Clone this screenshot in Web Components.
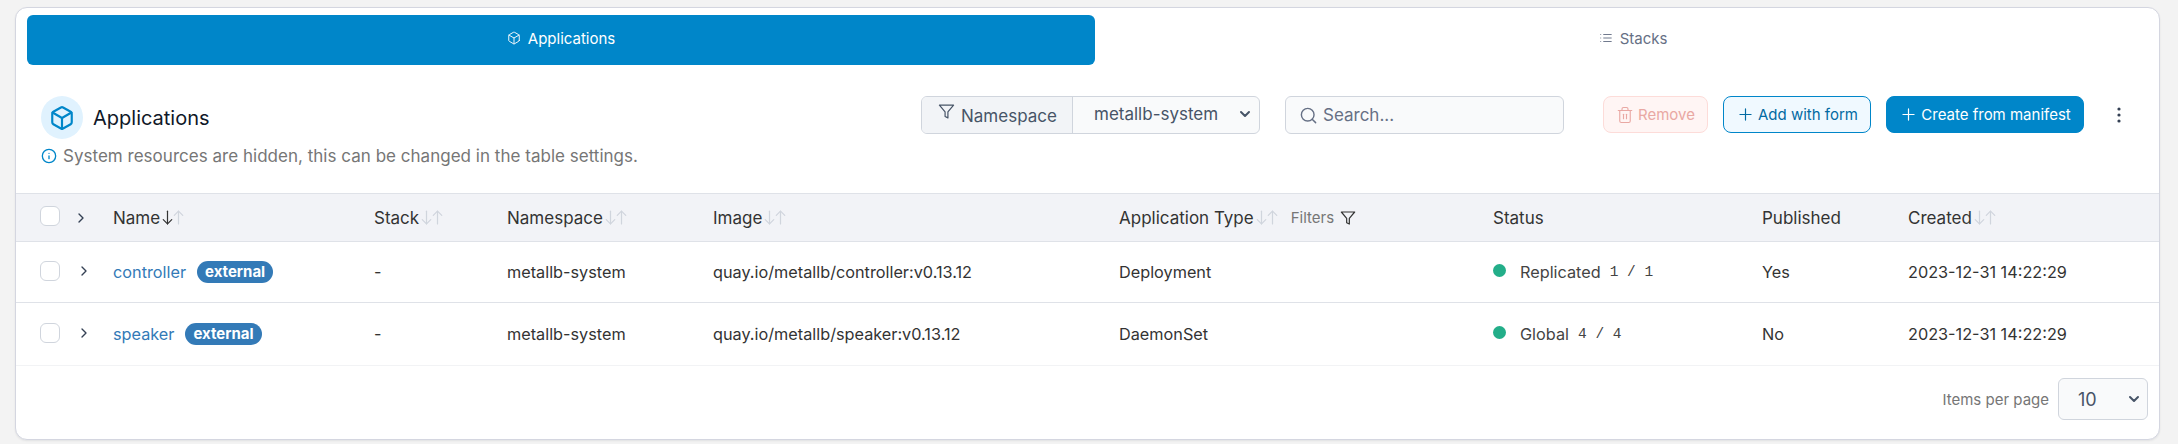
<!DOCTYPE html>
<html>
<head>
<meta charset="utf-8">
<title>Applications</title>
<style>
  html, body { margin:0; height:444px; overflow:hidden; background:#f3f3f3; }
  body { font-family:Inter, "Liberation Sans", sans-serif; color:#333; padding:7px 18px 0 15px; box-sizing:border-box; }
</style>
</head>
<body>
<pt-card>
  <pt-tabs>
    <pt-tab icon="box" active>Applications</pt-tab>
    <pt-tab icon="list">Stacks</pt-tab>
  </pt-tabs>
  <pt-heading title="Applications" note="System resources are hidden, this can be changed in the table settings.">
    <pt-namespace label="Namespace" value="metallb-system"></pt-namespace>
    <pt-search placeholder="Search..."></pt-search>
    <pt-button kind="danger" icon="trash" style="width:105px;margin-left:39px">Remove</pt-button>
    <pt-button kind="outline" icon="plus" style="width:148px;margin-left:15px">Add with form</pt-button>
    <pt-button kind="primary" icon="plus" style="width:198px;margin-left:15px">Create from manifest</pt-button>
    <pt-kebab></pt-kebab>
  </pt-heading>
  <pt-row kind="head">
    <pt-check></pt-check><pt-chevron head></pt-chevron>
    <pt-th sort="down">Name</pt-th>
    <pt-th sort="none">Stack</pt-th>
    <pt-th sort="none">Namespace</pt-th>
    <pt-th sort="none">Image</pt-th>
    <pt-th sort="none" filters>Application Type</pt-th>
    <pt-th>Status</pt-th>
    <pt-th>Published</pt-th>
    <pt-th sort="none">Created</pt-th>
  </pt-row>
  <pt-row style="--row-h:60px">
    <pt-check></pt-check><pt-chevron></pt-chevron>
    <pt-td><pt-link>controller</pt-link><pt-badge>external</pt-badge></pt-td>
    <pt-td>-</pt-td>
    <pt-td>metallb-system</pt-td>
    <pt-td>quay.io/metallb/controller:v0.13.12</pt-td>
    <pt-td>Deployment</pt-td>
    <pt-td><pt-status kind="Replicated" count="1 / 1"></pt-status></pt-td>
    <pt-td>Yes</pt-td>
    <pt-td>2023-12-31 14:22:29</pt-td>
  </pt-row>
  <pt-row style="--row-h:62px;--row-line:#f2f3f5">
    <pt-check></pt-check><pt-chevron></pt-chevron>
    <pt-td><pt-link>speaker</pt-link><pt-badge>external</pt-badge></pt-td>
    <pt-td>-</pt-td>
    <pt-td>metallb-system</pt-td>
    <pt-td>quay.io/metallb/speaker:v0.13.12</pt-td>
    <pt-td>DaemonSet</pt-td>
    <pt-td><pt-status kind="Global" count="4 / 4"></pt-status></pt-td>
    <pt-td>No</pt-td>
    <pt-td>2023-12-31 14:22:29</pt-td>
  </pt-row>
  <pt-footer label="Items per page" value="10"></pt-footer>
</pt-card>

<script>
// feather style strokes, all on a 24 box
const ICONS = {
  box: '<path d="M21 16V8a2 2 0 0 0-1-1.73l-7-4a2 2 0 0 0-2 0l-7 4A2 2 0 0 0 3 8v8a2 2 0 0 0 1 1.73l7 4a2 2 0 0 0 2 0l7-4A2 2 0 0 0 21 16z"/><polyline points="3.27 6.96 12 12.01 20.73 6.96"/><line x1="12" y1="22.08" x2="12" y2="12"/>',
  list: '<line x1="8" y1="6" x2="21" y2="6"/><line x1="8" y1="12" x2="21" y2="12"/><line x1="8" y1="18" x2="21" y2="18"/><line x1="3" y1="6" x2="3.01" y2="6"/><line x1="3" y1="12" x2="3.01" y2="12"/><line x1="3" y1="18" x2="3.01" y2="18"/>',
  info: '<circle cx="12" cy="12" r="10"/><line x1="12" y1="16" x2="12" y2="12"/><line x1="12" y1="8" x2="12.01" y2="8"/>',
  filter: '<polygon points="22 3 2 3 10 12.46 10 19 14 21 14 12.46 22 3"/>',
  search: '<circle cx="11" cy="11" r="8"/><line x1="21" y1="21" x2="16.65" y2="16.65"/>',
  trash: '<polyline points="3 6 5 6 21 6"/><path d="M19 6v14a2 2 0 0 1-2 2H7a2 2 0 0 1-2-2V6m3 0V4a2 2 0 0 1 2-2h4a2 2 0 0 1 2 2v2"/><line x1="10" y1="11" x2="10" y2="17"/><line x1="14" y1="11" x2="14" y2="17"/>',
  plus: '<line x1="12" y1="5" x2="12" y2="19"/><line x1="5" y1="12" x2="19" y2="12"/>',
  right: '<polyline points="9 18 15 12 9 6"/>',
  down: '<polyline points="6 9 12 15 18 9"/>',
  arrowDown: '<line x1="12" y1="3" x2="12" y2="21"/><polyline points="18 15 12 21 6 15"/>',
  arrowUp: '<line x1="12" y1="21" x2="12" y2="3"/><polyline points="6 9 12 3 18 9"/>'
};
const icon = (name, size, sw = 2) => `<svg width="${size}" height="${size}" viewBox="0 0 24 24" fill="none" stroke="currentColor" stroke-width="${sw}" stroke-linecap="round" stroke-linejoin="round" style="display:block;flex:none">${ICONS[name]}</svg>`;

// small helper, every element is just a shadow root with style + markup
function define(tag, render) {
  customElements.define(tag, class extends HTMLElement {
    connectedCallback() {
      if (this.shadowRoot) return;
      this.attachShadow({mode:'open'}).innerHTML = render(this);
    }
  });
}

define('pt-card', () => `<style>
  :host { display:block; height:433px; box-sizing:border-box; background:#fff; border:1px solid #d4d6e0; border-radius:12px; padding:7px 0 0; overflow:hidden; box-shadow:0 1px 2px rgba(16,24,40,.08); --cols:24px 33px 40px 261px 133px 206px 406px 374px 269px 146px 1fr; }
</style><slot></slot>`);

define('pt-tabs', () => `<style>
  :host { display:grid; grid-template-columns:1068px 1fr; padding-left:11px; }
</style><slot></slot>`);

define('pt-tab', el => `<style>
  :host { display:flex; align-items:center; justify-content:center; gap:7px; height:50px; box-sizing:border-box; padding-bottom:4px; ${el.hasAttribute('active') ? '' : 'padding-left:12px;'} font-size:15px; border-radius:6px; color:${el.hasAttribute('active') ? '#fff' : '#667085'}; background:${el.hasAttribute('active') ? '#0086c9' : 'transparent'}; }
</style>${icon(el.getAttribute('icon'), 14, 1.6)}<span><slot></slot></span>`);

define('pt-heading', el => `<style>
  :host { display:flex; height:128px; box-sizing:border-box; padding:31px 0 0 25px; }
  .left { width:880px; flex:none; }
  .title { display:flex; align-items:center; gap:10px; height:43px; font-size:20px; color:#101828; }
  .disc { width:42px; height:43px; border-radius:50%; background:#e0f2fe; color:#0086c9; display:flex; align-items:center; justify-content:center; }
  .note { display:flex; align-items:center; gap:6px; margin-top:7px; font-size:17px; color:#767676; }
  .note span { letter-spacing:.02px; }
  .note svg { color:#0086c9; }
  .tools { display:flex; align-items:flex-start; }
</style>
<div class="left">
  <div class="title"><div class="disc">${icon('box', 26, 2)}</div><span>${el.getAttribute('title')}</span></div>
  <div class="note">${icon('info', 16, 2)}<span>${el.getAttribute('note')}</span></div>
</div>
<div class="tools"><slot></slot></div>`);

define('pt-namespace', el => `<style>
  :host { display:flex; width:339px; height:38px; box-sizing:border-box; border:1px solid #d0d5dd; border-radius:6px; overflow:hidden; font-size:17px; color:#475467; background:#f9fafb; }
  .lab { display:flex; align-items:center; gap:6px; padding:0 16px; width:151px; box-sizing:border-box; background:#f2f4f7; border-right:1px solid #d0d5dd; }
  .lab svg { margin-top:-7px; }
  .lab span { margin-top:2px; }
  .val { flex:1; display:flex; align-items:center; justify-content:space-between; padding:0 6px 0 21px; margin-top:-2px; color:#475467; }
</style><div class="lab">${icon('filter', 17, 1.7)}<span>${el.getAttribute('label')}</span></div>
<div class="val"><span>${el.getAttribute('value')}</span>${icon('down', 16, 3)}</div>`);

define('pt-search', el => `<style>
  :host { display:flex; align-items:center; gap:5px; width:279px; height:38px; margin-left:25px; box-sizing:border-box; padding:0 13px; border:1px solid #d0d5dd; border-radius:6px; background:#f9fafb; font-size:17px; color:#667085; }
</style>${icon('search', 19, 1.8)}<span>${el.getAttribute('placeholder')}</span>`);

const BTN = {
  danger: 'background:#fff5f4;border-color:#fddcd9;color:#e9a8a3',
  outline: 'background:#f0f9ff;border-color:#0086c9;color:#026aa2',
  primary: 'background:#0086c9;border-color:#0086c9;color:#fff'
};
define('pt-button', el => {
  const trash = el.getAttribute('icon') === 'trash';
  return `<style>
  :host { display:flex; align-items:center; justify-content:center; gap:${trash ? 4 : 3}px; height:37px; box-sizing:border-box; border:1px solid; border-radius:8px; font-size:15px; ${BTN[el.getAttribute('kind')]} }
</style>${icon(el.getAttribute('icon'), trash ? 18 : 19, 1.5)}<span><slot></slot></span>`;
});

define('pt-kebab', () => `<style>
  :host { display:flex; align-items:center; justify-content:center; width:40px; height:37px; margin-left:15px; color:#344054; }
  svg { display:block; }
</style><svg width="4" height="16" viewBox="0 0 4 16" fill="currentColor"><circle cx="2" cy="2" r="1.6"/><circle cx="2" cy="8" r="1.6"/><circle cx="2" cy="14" r="1.6"/></svg>`);

define('pt-row', el => {
  const head = el.getAttribute('kind') === 'head';
  return `<style>
  :host { display:grid; grid-template-columns:var(--cols); align-items:center; height:${head ? '47px' : 'var(--row-h)'}; box-sizing:content-box; border-bottom:1px solid ${head ? '#dfe2e8' : 'var(--row-line,#dfe2e8)'}; ${head ? 'background:#f2f3f7;border-top:1px solid #dfe2e8;' : ''} }
  :host::before { content:""; }
</style><slot></slot>`;
});

define('pt-check', () => `<style>
  :host { display:block; width:20px; height:20px; box-sizing:border-box; border:1px solid #d0d5dd; border-radius:6px; background:#fff; margin-bottom:3px; }
</style>`);

define('pt-chevron', el => `<style>
  :host { display:block; color:#344054; margin:${el.hasAttribute('head') ? '0 0 0 0' : '-3px 0 0 3px'}; }
</style>${icon('right', 16, 2)}`);

const sortIcons = sort => `<span class="sort"><span class="${sort === 'down' ? 'on' : ''}">${icon('arrowDown', 17, 1.7)}</span><span>${icon('arrowUp', 17, 1.7)}</span></span>`;
define('pt-th', el => {
  const sort = el.getAttribute('sort');
  return `<style>
  :host { display:flex; align-items:center; font-size:17px; color:#333; white-space:nowrap; }
  .sort { display:flex; color:#d0d5dd; margin-left:-1px; }
  .sort > span { margin-right:-6px; }
  .on { color:#333; }
  .filters { display:flex; align-items:center; gap:6px; margin-left:16px; font-size:15px; color:#767676; }
  .filters svg { color:#333; }
</style><span><slot></slot></span>${sort ? sortIcons(sort) : ''}${el.hasAttribute('filters') ? `<span class="filters">Filters ${icon('filter', 16, 1.8)}</span>` : ''}`;
});

define('pt-td', () => `<style>
  :host { display:flex; align-items:center; font-size:16.25px; color:#333; white-space:nowrap; }
</style><slot></slot>`);

define('pt-link', () => `<style>
  :host { display:inline; color:#337ab7; }
</style><slot></slot>`);

define('pt-badge', () => `<style>
  :host { display:inline-block; margin-left:11px; padding:0 8px; height:22px; line-height:22px; border-radius:11px; background:#337ab7; color:#fff; font-size:15px; font-weight:700; }
</style><slot></slot>`);

define('pt-status', el => `<style>
  :host { display:flex; align-items:center; color:#444; }
  i { width:13px; height:13px; border-radius:50%; background:#23ae89; margin:-3px 14px 0 0; }
  .n { font-family:"Liberation Mono", monospace; font-size:14.5px; margin-left:9px; }
</style><i></i><span>${el.getAttribute('kind')}</span><span class="n">${el.getAttribute('count')}</span>`);

define('pt-footer', el => `<style>
  :host { display:flex; align-items:center; justify-content:flex-end; gap:9px; padding:12px 11px 0 0; font-size:15px; color:#767676; }
  .sel { display:flex; align-items:center; justify-content:space-between; width:90px; height:42px; box-sizing:border-box; padding:0 5px 0 19px; border:1px solid #d0d5dd; border-radius:6px; background:#f9fafb; font-size:18px; color:#475467; }
</style><span>${el.getAttribute('label')}</span><div class="sel"><span>${el.getAttribute('value')}</span>${icon('down', 16, 3)}</div>`);
</script>
</body>
</html>
